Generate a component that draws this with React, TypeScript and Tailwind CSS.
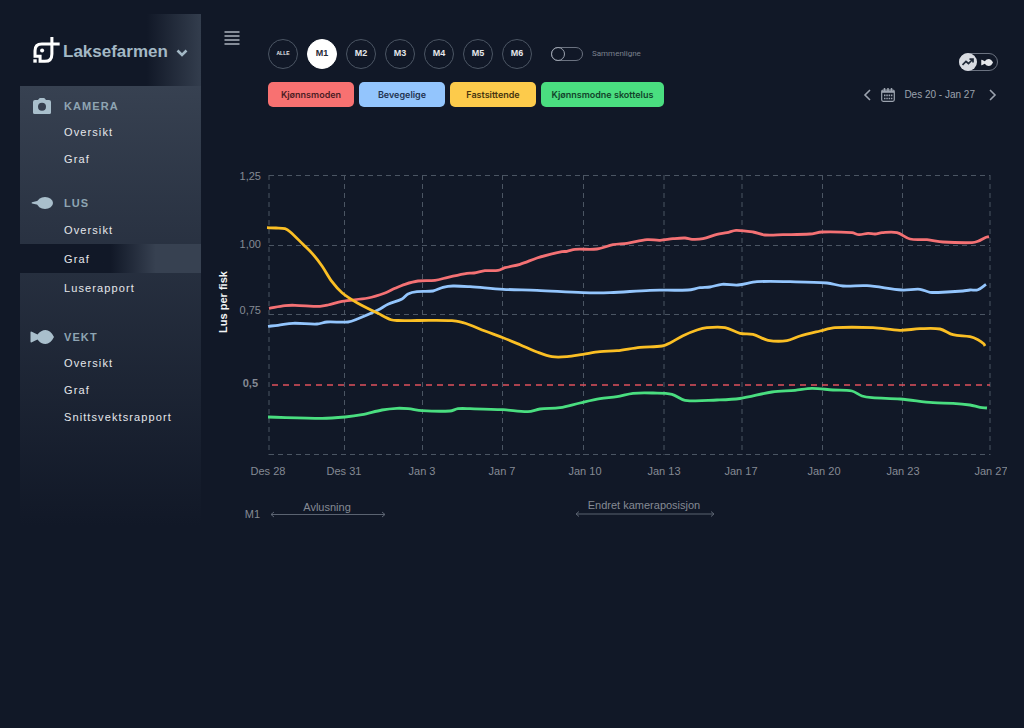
import React, { useState } from 'react';

type Point = [number, number];

interface Series {
  id: string;
  label: string;
  color: string;
  buttonClass: string;
  points: Point[];
}

interface NavSection {
  title: string;
  icon: React.ReactNode;
  items: string[];
  sectionClass: string;
  itemClass: string;
}

const SERIES: Series[] = [
  {
    id: 'kjonnsmoden',
    label: 'Kjønnsmoden',
    color: '#f47174',
    buttonClass: 'w-[86px] bg-[#f87171] text-[#4c1d24]',
    points: [
      [269, 308.3], [285, 305.6], [295, 305.3], [320, 306.3], [328, 305], [342, 301.3], [368, 298], [385, 293],
      [395, 288.3], [405, 284.3], [418, 281], [435, 280.3], [448, 277.3], [467, 273.3], [474, 273], [485, 270.7],
      [498, 270.3], [505, 267.7], [520, 264.3], [537, 258], [550, 254.3], [562, 251.7], [567, 251.3], [575, 249.3],
      [597, 249], [613, 244.7], [627, 243.3], [647, 239.7], [660, 240.3], [673, 238.7], [685, 238], [692, 239.3],
      [703, 238.7], [717, 234.3], [727, 232.7], [736, 230.3], [753, 232], [765, 235], [783, 234.7], [810, 234],
      [822, 232], [852, 232.7], [859, 234.7], [868, 233.3], [875, 234], [882, 232.7], [897, 232.7], [910, 239],
      [927, 239.7], [943, 242], [972, 242.7], [978, 241.3], [985, 237.7], [989, 236.7],
    ],
  },
  {
    id: 'bevegelige',
    label: 'Bevegelige',
    color: '#93c5fd',
    buttonClass: 'w-[86px] bg-[#93c5fd] text-[#1f3350]',
    points: [
      [268, 326.3], [278, 325.3], [293, 323.3], [317, 324], [327, 322], [348, 322], [358, 318.7], [378, 310],
      [388, 304.3], [402, 299], [408, 294], [417, 291.7], [433, 291], [443, 287.3], [453, 286], [470, 286.7],
      [503, 289.3], [537, 290.3], [583, 292.7], [610, 292.7], [650, 290.3], [688, 290], [700, 287.7], [710, 287],
      [722, 284.3], [738, 285], [757, 281.7], [790, 281.7], [827, 283], [843, 286], [867, 285.7], [902, 290],
      [920, 289.3], [930, 292.3], [947, 292], [963, 291], [970, 290], [978, 289.7], [986, 284.3],
    ],
  },
  {
    id: 'fastsittende',
    label: 'Fastsittende',
    color: '#fbbf24',
    buttonClass: 'w-[86px] bg-[#fdcb4b] text-[#46340f]',
    points: [
      [267, 227.7], [276, 228], [285, 228.7], [290, 231.7], [303, 244.3], [313, 254.3], [322, 266], [332, 281.7],
      [342, 292.7], [357, 302.7], [378, 313.3], [391, 319.7], [398, 320.5], [418, 320.5], [452, 320.7], [463, 322.7],
      [470, 325], [485, 331], [503, 337.7], [520, 344.7], [537, 352], [552, 356.7], [567, 356.7], [583, 354.3],
      [600, 351.7], [617, 350.7], [640, 347.3], [662, 346], [670, 343], [683, 335.7], [697, 330], [707, 327.7],
      [725, 327.7], [740, 333.3], [753, 334.3], [768, 340.3], [787, 340.7], [800, 336], [820, 331], [835, 327.7],
      [873, 327.7], [900, 330.3], [920, 328.7], [940, 329], [953, 334.7], [970, 336.7], [978, 339.7], [984, 344],
      [985, 346],
    ],
  },
  {
    id: 'skottelus',
    label: 'Kjønnsmodne skottelus',
    color: '#4ade80',
    buttonClass: 'w-[123px] bg-[#4ade80] text-[#12432a]',
    points: [
      [268, 417], [322, 418.3], [345, 417], [362, 414.7], [382, 410], [397, 408.3], [408, 408.7], [422, 410.7],
      [450, 411], [458, 408.7], [470, 408.7], [503, 409.7], [528, 411.7], [540, 409], [560, 407.7], [580, 403],
      [600, 398.7], [617, 396.7], [633, 393.3], [653, 393], [672, 394.3], [685, 400.3], [717, 400], [740, 398.5],
      [772, 392], [795, 390.3], [812, 388.3], [833, 390], [852, 391], [862, 396], [872, 397.7], [900, 399],
      [933, 402.7], [953, 403.3], [970, 405], [980, 407.3], [987, 408],
    ],
  },
];

const DATES = [
  { label: 'Des 28', line: 269, text: 268 },
  { label: 'Des 31', line: 344.5, text: 344 },
  { label: 'Jan 3', line: 422.5, text: 422 },
  { label: 'Jan 7', line: 502.5, text: 502 },
  { label: 'Jan 10', line: 583.5, text: 585 },
  { label: 'Jan 13', line: 664, text: 664 },
  { label: 'Jan 17', line: 742, text: 741 },
  { label: 'Jan 20', line: 822.5, text: 824 },
  { label: 'Jan 23', line: 902.5, text: 903 },
  { label: 'Jan 27', line: 990, text: 991 },
];

const CAGES = ['ALLE', 'M1', 'M2', 'M3', 'M4', 'M5', 'M6'];

// Smooth curve through all points, slope at each point taken from its neighbours
const toPath = (pts: Point[]) => {
  const slope = (i: number) => {
    const a = pts[Math.max(i - 1, 0)];
    const b = pts[Math.min(i + 1, pts.length - 1)];
    return (b[1] - a[1]) / (b[0] - a[0]);
  };
  return pts.reduce((d, [x, y], i) => {
    if (i === 0) return `M${x} ${y}`;
    const [px, py] = pts[i - 1];
    const dx = (x - px) / 3;
    return `${d} C${px + dx} ${py + slope(i - 1) * dx} ${x - dx} ${y - slope(i) * dx} ${x} ${y}`;
  }, '');
};

const Logo = () => (
  <svg className="size-[27px] shrink-0" viewBox="68 94 80 80" fill="none" aria-hidden="true">
    <path
      d="M124 93V144Q124 166 103 166H89V151H74V135Q74 115 94 115H147"
      stroke="#fff"
      strokeWidth="9"
    />
    <circle cx="95" cy="134" r="6" fill="#fff" />
    <rect x="69" y="160" width="10" height="10" fill="#fff" />
  </svg>
);

const CameraIcon = () => (
  <svg className="w-[18px] h-4" viewBox="0 0 18 16" fill="#a9bfcc" aria-hidden="true">
    <path
      fillRule="evenodd"
      d="M2 2h3l1.2-1.6Q6.500 0 7 0h4q.5 0 .8.400L13 2h3q2 0 2 2v10.500q0 1.500-1.500 1.500h-15Q0 16 0 14.500V4q0-2 2-2ZM9 4.800a4 4 0 1 0 0 8a4 4 0 1 0 0-8Z"
    />
  </svg>
);

const LouseIcon = () => (
  <svg className="w-[22px] h-3" viewBox="0 0 22 12" fill="#a9bfcc" aria-hidden="true">
    <ellipse cx="14" cy="6" rx="8" ry="6" />
    <path d="M8 3.500L1 5.200Q0 6 1 6.600L8 8Z" />
  </svg>
);

const FishIcon = ({ className, fill }: { className: string; fill: string }) => (
  <svg className={className} viewBox="0 0 24 14" fill={fill} aria-hidden="true">
    <path d="M0.500 2.500Q0.500 1 1.800 1.700L7.500 4.600Q11 0 15.500 0Q20.500 0 24 7Q20.500 14 15.500 14Q11 14 7.500 9.400L1.800 12.300Q0.500 13 0.500 11.500Z" />
  </svg>
);

const CalendarIcon = () => (
  <svg className="w-[14px] h-[14px]" viewBox="0 0 14 14" fill="none" stroke="#9ca3af" aria-hidden="true">
    <rect x="0.700" y="2" width="12.600" height="11.300" rx="1.500" strokeWidth="1.200" />
    <path d="M1 3.700H13" strokeWidth="2.200" />
    <path d="M3.500 0V3M7 0V3M10.500 0V3" strokeWidth="1.500" />
    <path d="M3 7.400H11.400M3 10.500H11.400" strokeWidth="1.700" strokeDasharray="1.500 0.800" />
  </svg>
);

const Chevron = ({ d }: { d: string }) => (
  <svg className="w-[8px] h-3" viewBox="0 0 8 12" fill="none" stroke="#9ca3af" strokeWidth="1.600" aria-hidden="true">
    <path d={d} />
  </svg>
);

const NAV: NavSection[] = [
  {
    title: 'KAMERA',
    icon: <CameraIcon />,
    items: ['Oversikt', 'Graf'],
    sectionClass: 'pt-[7px]',
    itemClass: 'h-[27px]',
  },
  {
    title: 'LUS',
    icon: <LouseIcon />,
    items: ['Oversikt', 'Graf', 'Luserapport'],
    sectionClass: 'pt-[18px]',
    itemClass: 'h-[29px]',
  },
  {
    title: 'VEKT',
    icon: <FishIcon className="w-6 h-[14px]" fill="#a9bfcc" />,
    items: ['Oversikt', 'Graf', 'Snittsvektsrapport'],
    sectionClass: 'pt-[22px]',
    itemClass: 'h-[27px]',
  },
];

const Sidebar = () => {
  const [active, setActive] = useState('LUS/Graf');

  return (
    <aside className="w-[181px] shrink-0">
      <button
        type="button"
        className="w-full h-[72px] pl-[13px] pr-[13px] flex items-center bg-linear-to-r from-transparent from-70% to-[#333d4d]"
      >
        <Logo />
        <span className="pl-[3px] pt-[3px] text-[17px] leading-5 font-bold text-[#a3b8c5]">Laksefarmen</span>
        <svg className="ml-auto mt-[5px] w-[12px] h-2" viewBox="0 0 12 8" fill="none" aria-hidden="true">
          <path d="M1.500 1.500L6 6L10.500 1.500" stroke="#a3b8c5" strokeWidth="2.600" />
        </svg>
      </button>

      <nav className="pb-24 bg-linear-to-b from-[#374151] to-[#111827] text-[11px] leading-4 tracking-widest">
        {NAV.map(section => (
          <section key={section.title} className={section.sectionClass}>
            <h2 className="h-[25px] flex items-center font-bold text-[#8fa5b3]">
              <span className="w-11 flex justify-center">{section.icon}</span>
              {section.title}
            </h2>
            <ul>
              {section.items.map(item => {
                const key = `${section.title}/${item}`;
                return (
                  <li key={item}>
                    <a
                      href="#"
                      onClick={() => setActive(key)}
                      className={`${section.itemClass} pl-11 flex items-center text-[#e5e7eb] ${active === key ? 'bg-linear-to-r from-[#111827] from-50% to-[#374151] to-75%' : ''}`}
                    >
                      {item}
                    </a>
                  </li>
                );
              })}
            </ul>
          </section>
        ))}
      </nav>
    </aside>
  );
};

const LiceChart = ({ visible }: { visible: string[] }) => (
  <svg
    className="w-full"
    viewBox="212 165 795 360"
    fontSize="11"
    fill="#858a94"
    role="img"
    aria-label="Lus per fisk"
  >
    <g stroke="#4b5563" strokeDasharray="5 4">
      {[175.5, 245.5, 314.5, 454.5].map(y => <path key={y} d={`M269 ${y}H990`} />)}
      {DATES.map(d => <path key={d.label} d={`M${d.line} 175V455`} />)}
    </g>
    <path d="M272 385H990" stroke="#e0505c" strokeWidth="1.500" strokeDasharray="6 5" />

    <g fill="none" strokeWidth="2.800">
      {SERIES.filter(s => visible.includes(s.id)).map(s => (
        <path key={s.id} d={toPath(s.points)} stroke={s.color} />
      ))}
    </g>

    <g textAnchor="end">
      <text x="261" y="180">1,25</text>
      <text x="261" y="248">1,00</text>
      <text x="261" y="314">0,75</text>
      <text x="258" y="387" fontWeight="bold">0,5</text>
      <text x="260" y="518">M1</text>
    </g>
    <text transform="translate(227 302) rotate(-90)" textAnchor="middle" fontWeight="bold" fill="#f3f4f6">
      Lus per fisk
    </text>

    <g textAnchor="middle">
      {DATES.map(d => <text key={d.label} x={d.text} y="475">{d.label}</text>)}
      <text x="327" y="511">Avlusning</text>
      <text x="644" y="509">Endret kameraposisjon</text>
    </g>
    <g fill="none" stroke="#5b6371">
      <path d="M271 514.500H385M274 512L271 514.500L274 517M382 512L385 514.500L382 517" />
      <path d="M576 514H714M579 511.500L576 514L579 516.500M711 511.500L714 514L711 516.500" />
    </g>
  </svg>
);

const App: React.FC = () => {
  const [cage, setCage] = useState('M1');
  const [compare, setCompare] = useState(false);
  const [visible, setVisible] = useState(SERIES.map(s => s.id));

  const toggleSeries = (id: string) =>
    setVisible(prev => (prev.includes(id) ? prev.filter(v => v !== id) : [...prev, id]));

  return (
    <div className="min-h-screen flex items-start pt-[14px] pl-5 bg-[#111827] font-['Liberation_Sans',Arial,sans-serif]">
      <Sidebar />

      <main className="flex-1 min-w-0">
        <header className="flex items-start pt-4 pl-[23px] pr-[26px]">
          <button type="button" aria-label="Meny" className="mr-7 pt-px">
            <svg className="w-4 h-[14px]" viewBox="0 0 16 14" stroke="#858c98" strokeWidth="2" aria-hidden="true">
              <path d="M0.500 1H15.500M0.500 5H15.500M0.500 9H15.500M0.500 13H15.500" />
            </svg>
          </button>

          <div className="pt-[9px]">
            <div className="flex items-center gap-[9px]">
              {CAGES.map(c => (
                <button
                  key={c}
                  type="button"
                  onClick={() => setCage(c)}
                  className={`size-[30px] rounded-full border font-bold ${c === 'ALLE' ? 'text-[5px]' : 'text-[9px]'} ${cage === c ? 'bg-white border-white text-[#1f2937]' : 'border-[#4b5563] text-[#e5e7eb]'}`}
                >
                  {c}
                </button>
              ))}
              <label className="ml-[10px] flex items-center gap-[9px] font-[Roboto,sans-serif] text-[8px] text-[#7b818d]">
                <input
                  type="checkbox"
                  checked={compare}
                  onChange={e => setCompare(e.target.checked)}
                  className="appearance-none w-8 h-[14px] flex items-center rounded-full border border-[#6b7280] before:size-[14px] before:-mx-px before:shrink-0 before:rounded-full before:border before:border-[#9ca3af] checked:justify-end"
                />
                Sammenligne
              </label>
            </div>

            <div className="mt-[13px] flex gap-[5px]">
              {SERIES.map(s => (
                <button
                  key={s.id}
                  type="button"
                  aria-pressed={visible.includes(s.id)}
                  onClick={() => toggleSeries(s.id)}
                  className={`h-[25px] rounded-[5px] font-[Inter,sans-serif] text-[9px] font-semibold whitespace-nowrap ${s.buttonClass}`}
                >
                  {s.label}
                </button>
              ))}
            </div>
          </div>

          <div className="ml-auto pt-[23px] flex flex-col items-end">
            <div className="w-[39px] h-[18px] flex items-center rounded-full border border-[#6b7280]">
              <button
                type="button"
                aria-label="Graf"
                className="size-[18px] -ml-px shrink-0 rounded-full bg-[#d8dbe1] flex items-center justify-center"
              >
                <svg className="w-3 h-2" viewBox="0 0 12 8" fill="none" stroke="#1f2937" strokeWidth="1.700" aria-hidden="true">
                  <path d="M0.500 7L4 3.500L6.500 5.500L10.500 1.500M7.500 1.200H11V4.500" />
                </svg>
              </button>
              <button type="button" aria-label="Fisk" className="flex-1 flex justify-center">
                <FishIcon className="w-3 h-[7px]" fill="#e5e7eb" />
              </button>
            </div>

            <div className="mt-4 pr-px flex items-center text-[10px] leading-4 text-[#9ca3af]">
              <button type="button" aria-label="Forrige"><Chevron d="M7 1L2 6L7 11" /></button>
              <button type="button" className="ml-[10px] mr-[14px] flex items-center gap-[9px]">
                <CalendarIcon />
                Des 20 - Jan 27
              </button>
              <button type="button" aria-label="Neste"><Chevron d="M1 1L6 6L1 11" /></button>
            </div>
          </div>
        </header>

        <div className="mt-[58px] pl-[11px] pr-[17px]">
          <LiceChart visible={visible} />
        </div>
      </main>
    </div>
  );
};

export default App;
